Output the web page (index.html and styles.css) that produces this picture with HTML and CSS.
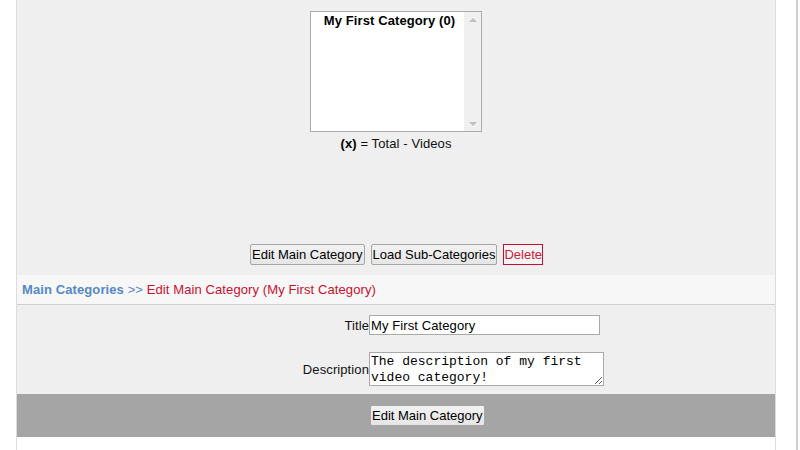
FILE: index.html
```html
<!DOCTYPE html>
<html>
<head>
<meta charset="utf-8">
<link rel="stylesheet" href="styles.css">
</head>
<body>
<div class="wrap">
  <div class="page">
    <section class="top">
      <div class="listbox" role="listbox">
        <div class="options">
          <div class="option">My First Category (0)</div>
        </div>
        <div class="scrollbar">
          <span class="arrow up"></span>
          <span class="arrow down"></span>
        </div>
      </div>
      <div class="legend"><b>(x)</b> = Total - Videos</div>
      <div class="actions">
        <button class="btn">Edit Main Category</button>
        <button class="btn">Load Sub-Categories</button>
        <button class="btn danger">Delete</button>
      </div>
    </section>
    <div class="crumbs">
      <a class="crumb-link">Main Categories</a> <span class="sep">&gt;&gt;</span> <span class="current">Edit Main Category (My First Category)</span>
    </div>
    <form class="form">
      <label class="lbl lbl-title">Title</label>
      <input class="field" type="text" value="My First Category">
      <label class="lbl lbl-desc">Description</label>
      <textarea class="area" rows="2">The description of my first video category!</textarea>
    </form>
    <div class="submitbar">
      <span></span>
      <button class="btn">Edit Main Category</button>
    </div>
    <div class="rest"></div>
  </div>
  <div class="edge"></div>
</div>
</body>
</html>
```
FILE: styles.css
```css
* { box-sizing: border-box; }
html, body { margin: 0; padding: 0; background: #fff; }
body {
  font-family: "Liberation Sans", Arial, sans-serif;
  font-size: 13px;
  letter-spacing: 0.1px;
  color: #111;
  height: 450px;
  overflow: hidden;
}
.wrap { display: flex; height: 450px; }
.page {
  margin-left: 16px;
  width: 760px;
  border-left: 1px solid #dcdcdc;
  border-right: 1px solid #dcdcdc;
  display: flex;
  flex-direction: column;
}
.edge {
  margin-left: 20px;
  width: 2px;
  background: #cfcfcf;
}
.top {
  background: #efefef;
  height: 275px;
  padding-top: 11px;
  display: flex;
  flex-direction: column;
  align-items: center;
}
.listbox {
  width: 172px;
  height: 121px;
  border: 1px solid #ababab;
  background: #fff;
  display: flex;
}
.options { flex: 1; padding-top: 1px; padding-left: 4px; }
.option {
  font-weight: bold;
  text-align: center;
  line-height: 16px;
  color: #000;
}
.scrollbar {
  width: 17px;
  background: #f0f0f0;
  display: flex;
  flex-direction: column;
  justify-content: space-between;
  align-items: center;
  padding: 6px 0 5px;
}
.arrow { width: 0; height: 0; border-left: 4px solid transparent; border-right: 4px solid transparent; }
.arrow.up { border-bottom: 4px solid #c2c2c2; }
.arrow.down { border-top: 4px solid #c2c2c2; }
.legend {
  margin-top: 4px;
  line-height: 16px;
  color: #111;
}
.legend b { color: #000; }
.actions {
  margin-top: 92px;
  margin-left: 1px;
  display: flex;
  gap: 6px;
}
.btn {
  font-family: "Liberation Sans", Arial, sans-serif;
  font-size: 13px;
  letter-spacing: 0;
  color: #000;
  background: linear-gradient(#f2f2f2, #e6e6e6);
  border: 1px solid #a6a6a6;
  border-radius: 2px;
  height: 21px;
  padding: 0 1px;
  line-height: 19px;
}
.btn.danger {
  color: #d0203a;
  border-color: #c8102e;
  background: #f4f4f4;
  border-radius: 0;
  padding: 0;
}
.crumbs {
  height: 30px;
  background: #f7f7f7;
  border-bottom: 1px solid #cfcfcf;
  padding-left: 5px;
  line-height: 30px;
}
.crumb-link { color: #5588c6; font-weight: bold; }
.sep { color: #5588c6; }
.current { color: #c8102e; }
.form {
  margin: 0;
  background: #efefef;
  height: 89px;
  display: grid;
  grid-template-columns: 352px 1fr;
  align-content: start;
  align-items: center;
}
.lbl { text-align: right; color: #111; }
.lbl-title { margin-top: 10px; }
.field {
  margin-top: 10px;
  width: 231px;
  height: 20px;
  border: 1px solid #a9a9a9;
  padding: 0 1px;
  font-family: "Liberation Sans", Arial, sans-serif;
  font-size: 13px;
  letter-spacing: 0.1px;
  color: #000;
  background: #fff;
}
.lbl-desc { margin-top: 17px; }
.area {
  margin-top: 17px;
  width: 235px;
  height: 34px;
  border: 1px solid #a9a9a9;
  padding: 1px 1px 0;
  font-family: "Liberation Mono", "Courier New", monospace;
  font-size: 13px;
  line-height: 16px;
  color: #000;
  background: #fff;
  resize: both;
  overflow: hidden;
}
.submitbar {
  background: #a5a5a5;
  height: 43px;
  display: grid;
  grid-template-columns: 353px auto;
  justify-content: start;
  align-items: center;
  padding-bottom: 1px;
}
.rest { flex: 1; background: #fff; }
```
